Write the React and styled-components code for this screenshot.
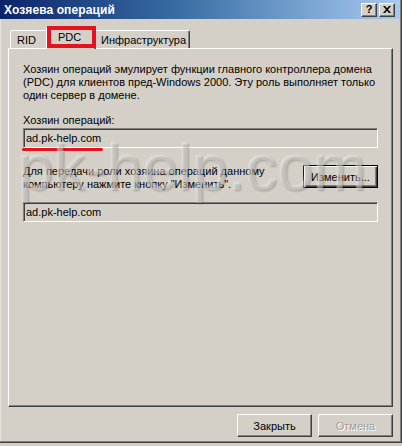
import React from "react";
import styled, { createGlobalStyle, css } from "styled-components";

const GlobalStyle = createGlobalStyle`
  html, body {
    margin: 0;
    padding: 0;
    background: #d4d0c8;
  }
  body {
    font-family: "Liberation Sans", Arial, sans-serif;
    font-size: 11px;
    color: #000;
  }
`;

const tabs = [
  { id: "rid", label: "RID", width: 38 },
  { id: "pdc", label: "PDC", width: 50, active: true, marked: true },
  { id: "infra", label: "Инфраструктура", width: 96 },
];

const App = () => {
  return (
    <>
      <GlobalStyle />
      <Window>
        <TitleBar>
          <TitleText>Хозяева операций</TitleText>
          <TitleButtons>
            <CaptionButton>?</CaptionButton>
            <CaptionButton>
              <svg width="8" height="7" viewBox="0 0 8 7">
                <path
                  d="M0 0h2l2 2.2L6 0h2L5 3.5 8 7H6L4 4.8 2 7H0l3-3.5z"
                  fill="#000"
                />
              </svg>
            </CaptionButton>
          </TitleButtons>
        </TitleBar>

        <Body>
          <TabStrip>
            {tabs.map((t) => (
              <Tab key={t.id} $active={t.active} style={{ width: t.width }}>
                {t.label}
                {t.marked && <RedFrame />}
              </Tab>
            ))}
          </TabStrip>

          <Panel>
            <Paragraph>
              Хозяин операций эмулирует функции главного контроллера домена
              (PDC) для клиентов пред-Windows 2000. Эту роль выполняет только
              один сервер в домене.
            </Paragraph>

            <Label>Хозяин операций:</Label>
            <Field>
              ad.pk-help.com
              <RedUnderline />
            </Field>

            <TransferRow>
              <Paragraph>
                Для передачи роли хозяина операций данному
                <br />
                компьютеру нажмите кнопку "Изменить".
              </Paragraph>
              <Button $isDefault>Изменить...</Button>
            </TransferRow>

            <Field $gap={11}>ad.pk-help.com</Field>
          </Panel>

          <Footer>
            <Button>Закрыть</Button>
            <Button disabled>Отмена</Button>
          </Footer>
        </Body>

        {/* водяной знак поверх диалога */}
        <Watermark>pk-help.com</Watermark>
      </Window>
    </>
  );
};

export default App;

const Window = styled.div`
  position: relative;
  width: 402px;
  height: 443px;
  box-sizing: border-box;
  background: #d4d0c8;
  border-right: 1px solid #404040;
  border-bottom: 1px solid #404040;
  box-shadow: inset -1px -1px #808080, inset 1px 0 #e8e6e1;
  display: flex;
  flex-direction: column;
  overflow: hidden;
`;

const TitleBar = styled.div`
  height: 19px;
  margin-right: 1px;
  display: flex;
  align-items: center;
  justify-content: space-between;
  padding: 0 5px 0 4px;
  background: linear-gradient(to right, #0a246a 0%, #3a6ea5 45%, #a6caf0 100%);
`;

const TitleText = styled.span`
  color: #fff;
  font-weight: bold;
  font-size: 12px;
  letter-spacing: 0.1px;
`;

const TitleButtons = styled.div`
  display: flex;
  gap: 2px;
`;

const CaptionButton = styled.div`
  width: 16px;
  height: 14px;
  box-sizing: border-box;
  display: flex;
  align-items: center;
  justify-content: center;
  background: #d4d0c8;
  border: 1px solid;
  border-color: #fff #404040 #404040 #fff;
  box-shadow: inset -1px -1px #808080;
  font-weight: bold;
  font-size: 11px;
  line-height: 1;
`;

const Body = styled.div`
  padding: 8px 8px 0 8px;
  display: flex;
  flex-direction: column;
`;

const TabStrip = styled.div`
  height: 21px;
  padding-left: 2px;
  display: flex;
  align-items: flex-end;
  position: relative;
  z-index: 1;
`;

const Tab = styled.div`
  position: relative;
  box-sizing: border-box;
  height: 18px;
  padding: 0 6px;
  display: flex;
  align-items: center;
  background: #d4d0c8;
  border: 1px solid;
  border-bottom: none;
  border-color: #fff #404040 transparent #fff;
  border-radius: 2px 2px 0 0;
  box-shadow: inset -1px 0 #808080;
  white-space: nowrap;
  ${(p) =>
    p.$active &&
    css`
      height: 22px;
      margin: 0 -2px -1px;
      padding: 0 0 3px 11px;
      z-index: 2;
    `}
`;

const RedFrame = styled.div`
  position: absolute;
  left: 0;
  right: -1px;
  top: -2px;
  bottom: 1px;
  border: 4px solid #e3141f;
  pointer-events: none;
`;

const Panel = styled.div`
  height: 359px;
  box-sizing: border-box;
  border: 1px solid;
  border-color: #fff #404040 #404040 #fff;
  box-shadow: inset -1px -1px #808080;
  padding: 14px 14px 0 14px;
  display: flex;
  flex-direction: column;
`;

const Paragraph = styled.p`
  margin: 0;
  line-height: 13px;
`;

const Label = styled.div`
  margin-top: 12px;
  line-height: 13px;
`;

const Field = styled.div`
  position: relative;
  margin-top: ${(p) => p.$gap || 1}px;
  height: 20px;
  box-sizing: border-box;
  padding-left: 2px;
  display: flex;
  align-items: center;
  border: 1px solid;
  border-color: #808080 #fff #fff #808080;
  box-shadow: inset 1px 1px #404040;
`;

const RedUnderline = styled.span`
  position: absolute;
  left: -2px;
  bottom: -4px;
  width: 81px;
  height: 3px;
  border-radius: 2px;
  background: #e3141f;
`;

const TransferRow = styled.div`
  margin-top: 17px;
  display: flex;
  justify-content: space-between;
  align-items: flex-start;
`;

const Button = styled.button`
  width: 75px;
  height: 23px;
  box-sizing: border-box;
  padding: 0;
  background: #d4d0c8;
  font-family: "Liberation Sans", Arial, sans-serif;
  font-size: 11px;
  color: #000;
  border: 1px solid;
  border-color: #fff #404040 #404040 #fff;
  box-shadow: inset -1px -1px #808080;
  &:disabled {
    color: #a19d95;
    text-shadow: 1px 1px #fff;
  }
  ${(p) =>
    p.$isDefault &&
    css`
      border-color: #000;
      box-shadow: inset 1px 1px #fff, inset -1px -1px #404040,
        inset -2px -2px #808080;
    `}
`;

const Footer = styled.div`
  margin-top: 7px;
  display: flex;
  justify-content: flex-end;
  gap: 6px;
`;

const Watermark = styled.div`
  position: absolute;
  left: 18px;
  top: 136px;
  font-family: "Liberation Sans", Arial, sans-serif;
  font-size: 64px;
  line-height: 64px;
  color: rgba(228, 226, 221, 0.35);
  text-shadow: 1px 1px 2px rgba(0, 0, 0, 0.22),
    -1px -1px 1px rgba(255, 255, 255, 0.3);
  pointer-events: none;
  white-space: nowrap;
`;
